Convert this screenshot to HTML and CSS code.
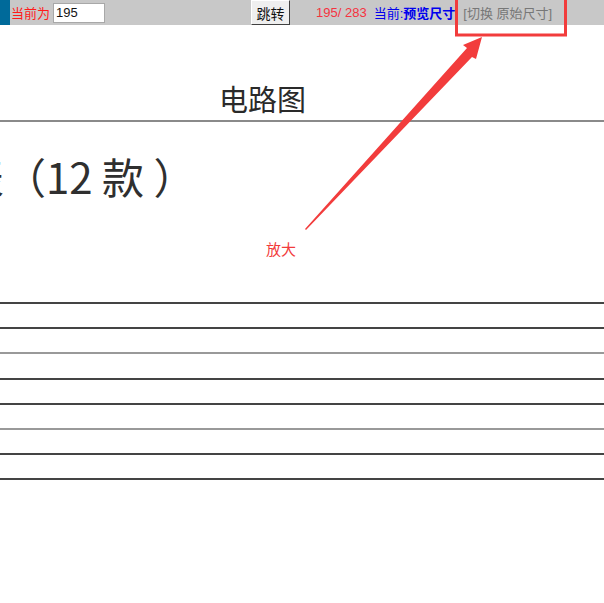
FILE: index.html
```html
<!DOCTYPE html>
<html lang="zh-CN">
<head>
  <meta charset="UTF-8">
  <title>电路图 预览</title>
  <link rel="stylesheet" href="styles.css">
</head>
<body>
  <div class="toolbar">
    <span class="strip"></span>
    <span class="cur-label">当前为</span>
    <input type="text" class="page-input" value="195">
    <button type="button" class="jump-btn">跳转</button>
    <span class="count">195/ 283</span>
    <span class="mode">当前:<b>预览尺寸</b></span>
    <span class="switch">[切换 原始尺寸]</span>
  </div>

  <div class="sheet">
    <div class="sheet-head">电路图</div>
    <div class="sheet-title">表（12 款 ）</div>
    <div class="rules">
      <div class="rule"></div>
      <div class="rule"></div>
      <div class="rule light"></div>
      <div class="rule"></div>
      <div class="rule"></div>
      <div class="rule light"></div>
      <div class="rule"></div>
      <div class="rule"></div>
    </div>
  </div>

  <div class="note">放大</div>

  <!-- annotation: red box + arrow pointing at the switch link -->
  <svg class="marks" width="604" height="603" viewBox="0 0 604 603">
    <rect x="456.5" y="-2" width="109" height="37" fill="none" stroke="#f23c3c" stroke-width="3"/>
    <polygon points="305,229 306,230 472,57 476,59 482,37 463,45 467,48" fill="#f23c3c"/>
  </svg>
</body>
</html>
```

FILE: styles.css
```css
body {
  margin: 0;
  background: #fff;
  font-family: "Liberation Sans", "Noto Sans CJK SC", sans-serif;
  position: relative;
  min-height: 603px;
  overflow: hidden;
}

.toolbar {
  display: flex;
  align-items: center;
  height: 25px;
  background: #c8c8c8;
  font-size: 13px;
}

.strip {
  align-self: stretch;
  width: 10px;
  background: #006a9a;
}

.cur-label {
  color: #ff1a1a;
  margin-left: 1px;
}

.page-input {
  width: 46px;
  height: 18px;
  margin: 0 0 0 3px;
  padding: 0 2px;
  border: 1px solid #a8a8a8;
  font-size: 13px;
  font-family: "Liberation Sans", sans-serif;
  color: #111;
}

.jump-btn {
  align-self: flex-start;
  margin-left: 146px;
  width: 39px;
  height: 25px;
  padding: 0;
  border: 1px solid #fff;
  border-right-color: #404040;
  border-bottom-color: #404040;
  background: #efefef;
  font-size: 14px;
  font-family: "Noto Sans CJK SC", sans-serif;
  color: #111;
}

.count {
  margin-left: 26px;
  color: #f5333f;
}

.mode {
  margin-left: 7px;
  color: #0000ee;
}

.mode b {
  font-weight: bold;
}

.switch {
  margin-left: 8px;
  color: #777;
}

.sheet {
  padding-top: 56px;
}

.sheet-head {
  padding-left: 219px;
  font-size: 29px;
  line-height: 35px;
  color: #2a2a2a;
  font-family: "Noto Sans CJK SC", sans-serif;
}

.sheet-head::after {
  content: "";
  display: block;
  margin-left: -219px;
  margin-top: 4px;
  height: 2px;
  background: #8a8a8a;
}

.sheet-title {
  margin: 26px 0 0 -38px;
  font-size: 42px;
  line-height: 56px;
  color: #2f2f2f;
  font-family: "Noto Sans CJK SC", sans-serif;
}

.rules {
  margin-top: 98px;
  display: flex;
  flex-direction: column;
  gap: 23.2px;
}

.rule {
  height: 2px;
  background: #444;
}

.rule.light {
  background: #999;
}

.note {
  position: absolute;
  left: 266px;
  top: 238px;
  font-size: 15px;
  color: #f23c3c;
  font-family: "Noto Sans CJK SC", sans-serif;
}

.marks {
  position: absolute;
  left: 0;
  top: 0;
  pointer-events: none;
}
```
